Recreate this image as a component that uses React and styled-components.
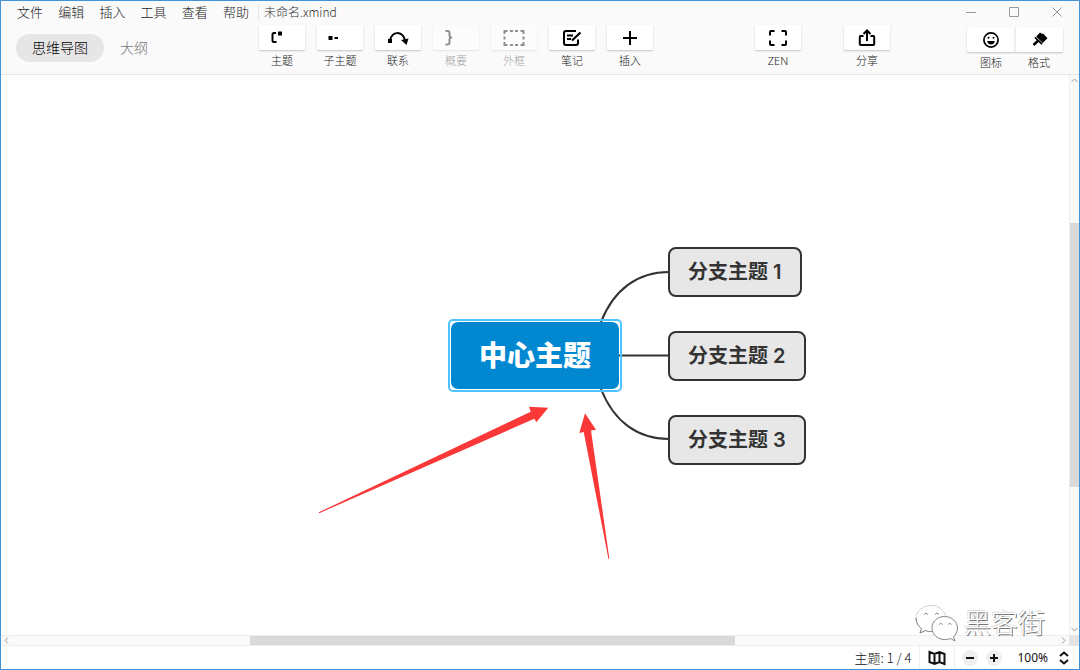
import React from "react";
import styled, { createGlobalStyle } from "styled-components";

const Global = createGlobalStyle`
  *, *::before, *::after { box-sizing: border-box; }
  body {
    margin: 0;
    font-family: "Noto Sans", "Noto Sans CJK SC", sans-serif;
    color: #333;
    background: #fff;
  }
  button { font: inherit; color: inherit; border: 0; padding: 0; background: none; cursor: pointer; }
`;

const Window = styled.div`
  display: flex;
  flex-direction: column;
  min-height: 100vh;
  border: 1px solid #4394d6;
`;

const Header = styled.header`
  background: #fafafa;
  border-bottom: 1px solid #e6e6e6;
`;

const TitleBar = styled.div`
  display: flex;
  align-items: center;
  height: 22px;
  padding: 0 16px;
  font-size: 12px;
`;

const Menu = styled.nav`
  display: flex;
  justify-content: space-between;
  width: 232px;
`;

const MenuItem = styled.button`
  font-size: 13px;
  font-weight: 300;
  line-height: 22px;
  white-space: nowrap;
  color: #222;
`;

const FileName = styled.span`
  margin-left: 9px;
  padding-left: 5px;
  border-left: 1px solid #e8e8e8;
  font-family: "Noto Sans CJK SC", sans-serif;
  line-height: 16px;
  font-weight: 300;
  color: #333;
`;

const WindowControls = styled.div`
  display: flex;
  gap: 31px;
  margin-left: auto;
  color: #999;
`;

const WindowButton = styled.button`
  display: grid;
  place-items: center;
  width: 12px;
  height: 20px;
`;

const Toolbar = styled.div`
  display: flex;
  align-items: flex-start;
  height: 51px;
  padding: 2px 16px 0 15px;
`;

const ViewTabs = styled.div`
  display: flex;
  width: 243px;
  padding-top: 9px;
`;

const ViewTab = styled.button`
  height: 28px;
  padding: 0 16px;
  border-radius: 14px;
  font-size: 14px;
  font-weight: 300;
  line-height: 28px;
  white-space: nowrap;
  background: ${(p) => (p.$active ? "#e6e6e6" : "transparent")};
  color: ${(p) => (p.$active ? "#000" : "#777")};
`;

const ToolGroup = styled.div`
  display: flex;
  gap: ${(p) => p.$gap || 12}px;
  margin-left: ${(p) => (p.$end ? "auto" : "0")};
  margin-right: ${(p) => p.$after || 0}px;
`;

const Tool = styled.button`
  display: flex;
  flex-direction: column;
  gap: 3px;
  width: 46px;
  font-size: 11px;
  font-weight: 300;
  line-height: 16px;
  text-align: center;
  white-space: nowrap;
  color: #222;
  opacity: ${(p) => (p.disabled ? 0.42 : 1)};
`;

const ToolFace = styled.span`
  display: flex;
  align-items: center;
  justify-content: ${(p) => (p.$lead ? "flex-start" : "center")};
  width: 100%;
  height: 25px;
  padding-left: ${(p) => (p.$lead ? 8 : 0)}px;
  background: #fff;
  color: #000;
  border-radius: 1px;
  box-shadow: 0 1px 2px rgba(0, 0, 0, 0.22);
`;

const PanelGroup = styled.div`
  display: flex;
  padding-top: 2px;
`;

const PanelTool = styled(Tool)`
  width: 48px;
  & + & ${ToolFace} { border-left: 1px solid #eee; }
`;

const Workspace = styled.main`
  position: relative;
  flex: 1;
  display: grid;
  grid-template-columns: 1fr 10px;
  grid-template-rows: 1fr 11px;
`;

const Canvas = styled.div`
  position: relative;
  min-height: 400px;
  overflow: hidden;
  background: #fff;
`;

const Origin = styled.div`
  position: absolute;
  left: 50%;
  top: 50%;
`;

const Lines = styled.svg`
  position: absolute;
  left: -235px;
  top: -115px;
  overflow: visible;
`;

const Topic = styled.div`
  position: absolute;
  left: 133px;
  top: ${(p) => p.$y}px;
  padding: 0 18px;
  height: 50px;
  border: 2px solid #333;
  border-radius: 8px;
  background: #e7e7e7;
  font-family: Inter, "Noto Sans CJK SC", sans-serif;
  font-size: 20px;
  font-weight: 600;
  line-height: 46px;
  white-space: nowrap;
`;

const Selection = styled.div`
  position: absolute;
  left: -87px;
  top: -36px;
  padding: 1px;
  border: 2px solid #4dc3ff;
  border-radius: 5px;
`;

const CentralTopic = styled.div`
  width: 168px;
  height: 67px;
  border-radius: 7px;
  background: #0288d1;
  color: #fff;
  font-size: 28px;
  font-weight: 900;
  line-height: 67px;
  text-align: center;
`;

const Watermark = styled.div`
  position: absolute;
  right: 34px;
  bottom: 3px;
  display: flex;
  align-items: center;
  gap: 6px;
  font-size: 27px;
  line-height: 40px;
  font-weight: 300;
  color: #fff;
  text-shadow: 1px 1px 0 #777, -1px -1px 0 #ddd;
`;

const Track = styled.div`
  display: flex;
  flex-direction: ${(p) => (p.$vertical ? "column" : "row")};
  align-items: center;
  justify-content: space-between;
  padding: ${(p) => (p.$vertical ? "1px 0" : "0 1px")};
  background: #fafafa;
  border: 0 solid #eee;
  border-width: ${(p) => (p.$vertical ? "0 0 0 1px" : "1px 0")};
  color: #999;
`;

const Rail = styled.div`
  flex: 1;
  align-self: stretch;
  display: flex;
  flex-direction: ${(p) => (p.$vertical ? "column" : "row")};
`;

const Before = styled.div`
  flex: ${(p) => p.$part} 0 0;
`;

const Thumb = styled.div`
  flex: ${(p) => p.$part} 0 0;
  background: #d9d9d9;
`;

const Arrow = styled.button`
  display: grid;
  place-items: center;
  width: 9px;
  height: 9px;
`;

const Corner = styled.div`
  background: #e4e4e4;
`;

const StatusBar = styled.footer`
  display: flex;
  justify-content: flex-end;
  align-items: center;
  height: 23px;
  padding-right: 10px;
  font-size: 12px;
  line-height: 23px;
  color: #111;
`;

const TopicCount = styled.span`
  padding-right: 8px;
  font-family: "Noto Sans CJK SC", sans-serif;
  font-size: 13px;
  font-weight: 300;
`;

const MapButton = styled.button`
  display: grid;
  place-items: center;
  width: 36px;
  height: 23px;
  border: solid #eee;
  border-width: 0 1px;
`;

const ZoomGroup = styled.div`
  display: flex;
  align-items: center;
  gap: 8px;
  padding-left: 7px;
`;

const RoundButton = styled.button`
  display: grid;
  place-items: center;
  width: 16px;
  height: 16px;
  border-radius: 50%;
  background: #f0f0f0;
`;

const ZoomValue = styled.button`
  display: flex;
  align-items: center;
  gap: 11px;
  padding-left: 7px;
`;

const Icon = ({ w = 20, h = 20, sw = 2, children, ...rest }) => (
  <svg width={w} height={h} viewBox={`0 0 ${w} ${h}`} fill="none" stroke="currentColor" strokeWidth={sw} aria-hidden="true" {...rest}>
    {children}
  </svg>
);

const icons = {
  topic: (
    <Icon>
      <path d="M9 5H7Q5.500 5 5.500 6.500V12.500Q5.500 14 7 14H9.500" />
      <path d="M11 3.500H15V7.500H11z" fill="currentColor" stroke="none" />
    </Icon>
  ),
  subtopic: (
    <Icon>
      <path d="M3.500 8H7.500V12H3.500z" fill="currentColor" stroke="none" />
      <path d="M9.500 10H13" />
    </Icon>
  ),
  relation: (
    <Icon w={22}>
      <path d="M3 12.500C5 3 15 2.500 18 12" />
      <path d="M1 11H5V15H1zM14 12L21.500 10.500L19.500 17z" fill="currentColor" stroke="none" />
    </Icon>
  ),
  summary: (
    <Icon>
      <path d="M4.500 3H6.500Q8.500 3 8.500 5V7.500Q8.500 9.500 11 9.500Q8.500 9.500 8.500 11.500V14.500Q8.500 16.500 6.500 16.500H4.500" />
    </Icon>
  ),
  boundary: (
    <Icon w={22}>
      <path d="M1.500 6V3H4.500M7 3H10M12 3H15M17.500 3H20.500V6M20.500 8.500V11.500M20.500 14V17H17.500M15 17H12M10 17H7M4.500 17H1.500V14M1.500 11.500V8.500" />
    </Icon>
  ),
  note: (
    <Icon>
      <path d="M14 3H4Q2 3 2 5V15Q2 17 4 17H14Q16 17 16 15V11.500M5 7.500H11M5 11H9" />
      <path d="M10 12.500L18.500 4.500" strokeWidth="2.200" />
    </Icon>
  ),
  plus: (
    <Icon>
      <path d="M10 3V17M3 10H17" />
    </Icon>
  ),
  zen: (
    <Icon>
      <path d="M2 7.500V4Q2 3 3 3H6.500M13.500 3H17Q18 3 18 4V7.500M18 12.500V16Q18 17 17 17H13.500M6.500 17H3Q2 17 2 16V12.500" />
    </Icon>
  ),
  share: (
    <Icon>
      <path d="M6.500 8H3.500Q2.800 8 2.800 9V16Q2.800 17 3.800 17H16.200Q17.200 17 17.200 16V9Q17.200 8 16.500 8H13.500M10 13V3M6.500 6L10 2.500L13.500 6" />
    </Icon>
  ),
  smile: (
    <Icon sw={1.700}>
      <circle cx="10" cy="10" r="7.100" />
      <path d="M6.200 11H13.800Q13.200 14.500 10 14.500Q6.800 14.500 6.200 11z" fill="currentColor" stroke="none" />
      <circle cx="7.500" cy="7.800" r="1" fill="currentColor" stroke="none" />
      <circle cx="12.500" cy="7.800" r="1" fill="currentColor" stroke="none" />
    </Icon>
  ),
  brush: (
    <Icon>
      <path d="M10 2.500L12 4L13 3.500L17.500 8.300L12.700 13L6.200 6.500z" fill="currentColor" stroke="none" />
      <path d="M5 7.300L12 14.200" strokeWidth="1.800" />
      <path d="M8 10.800L3.500 15" strokeWidth="2.600" />
    </Icon>
  ),
};

const tools = [
  { label: "主题", icon: icons.topic, lead: true },
  { label: "子主题", icon: icons.subtopic, lead: true },
  { label: "联系", icon: icons.relation },
  { label: "概要", icon: icons.summary, lead: true, disabled: true },
  { label: "外框", icon: icons.boundary, disabled: true },
  { label: "笔记", icon: icons.note },
  { label: "插入", icon: icons.plus },
];

const ToolButton = ({ as: Base = Tool, label, icon, lead, disabled }) => (
  <Base disabled={disabled}>
    <ToolFace $lead={lead}>{icon}</ToolFace>
    <span>{label}</span>
  </Base>
);

const chevrons = {
  up: "M1.500 6L4.500 3L7.500 6",
  down: "M1.500 3L4.500 6L7.500 3",
  left: "M6 1.500L3 4.500L6 7.500",
  right: "M3 1.500L6 4.500L3 7.500",
};

const ScrollArrow = ({ dir, label }) => (
  <Arrow aria-label={label}>
    <Icon w={9} h={9} sw={1}><path d={chevrons[dir]} /></Icon>
  </Arrow>
);

const menus = ["文件", "编辑", "插入", "工具", "查看", "帮助"];

export default function App() {
  return (
    <Window>
      <Global />
      <Header>
        <TitleBar>
          <Menu>{menus.map((m) => <MenuItem key={m}>{m}</MenuItem>)}</Menu>
          <FileName>未命名.xmind</FileName>
          <WindowControls>
            <WindowButton aria-label="最小化"><Icon w={12} h={12} sw={1}><path d="M1 6.500H11" /></Icon></WindowButton>
            <WindowButton aria-label="最大化"><Icon w={12} h={12} sw={1}><path d="M1.500 1.500H10.500V10.500H1.500z" /></Icon></WindowButton>
            <WindowButton aria-label="关闭"><Icon w={12} h={12} sw={1}><path d="M1.500 1.500L10.500 10.500M10.500 1.500L1.500 10.500" /></Icon></WindowButton>
          </WindowControls>
        </TitleBar>
        <Toolbar>
          <ViewTabs>
            <ViewTab $active>思维导图</ViewTab>
            <ViewTab>大纲</ViewTab>
          </ViewTabs>
          <ToolGroup>{tools.map((t) => <ToolButton key={t.label} {...t} />)}</ToolGroup>
          <ToolGroup $end $gap={43} $after={77}>
            <ToolButton label="ZEN" icon={icons.zen} />
            <ToolButton label="分享" icon={icons.share} />
          </ToolGroup>
          <PanelGroup>
            <ToolButton as={PanelTool} label="图标" icon={icons.smile} />
            <ToolButton as={PanelTool} label="格式" icon={icons.brush} />
          </PanelGroup>
        </Toolbar>
      </Header>

      <Workspace>
        <Canvas>
          <Origin>
            <Lines width="400" height="330" viewBox="300 240 400 330" aria-hidden="true">
              <g fill="none" stroke="#333" strokeWidth="2">
                <path d="M601 322C614 289 638 272 669 272" />
                <path d="M619 355.500H669" />
                <path d="M601 389C614 422 638 439 669 439" />
              </g>
              <g fill="#fb3838">
                <path d="M548.300 407.700L529 406.700L530.700 411.700L318.800 512.300L319.200 513.200L534.300 418.700L536.300 422.300z" />
                <path d="M585 413.300L579.300 433L583.700 432L608.500 559L609.400 558.900L591 430.500L596 429.700z" />
              </g>
            </Lines>
            <Topic $y={-108}>分支主题 1</Topic>
            <Topic $y={-24}>分支主题 2</Topic>
            <Topic $y={60}>分支主题 3</Topic>
            <Selection><CentralTopic>中心主题</CentralTopic></Selection>
          </Origin>
        </Canvas>
        <Track $vertical>
          <ScrollArrow dir="up" label="向上滚动" />
          <Rail $vertical><Before $part={138} /><Thumb $part={264} /><Before $part={138} /></Rail>
          <ScrollArrow dir="down" label="向下滚动" />
        </Track>
        <Track>
          <ScrollArrow dir="left" label="向左滚动" />
          <Rail><Before $part={239} /><Thumb $part={485} /><Before $part={324} /></Rail>
          <ScrollArrow dir="right" label="向右滚动" />
        </Track>
        <Corner />
        <Watermark>
          <svg width="43" height="38" viewBox="0 0 43 38" fill="#fff" stroke="#aaa" strokeWidth="0.900" aria-hidden="true">
            <path d="M16 1.500C8 1.500 1 7 1 14C1 18.500 3 22 6.500 24.500L5 29L10.500 26.500C13 27.500 14.500 27.500 17 27.500C25 27 31 21 31 14C30 6 24 1.500 16 1.500z" stroke="#ccc" />
            <path d="M1 14C1 18.500 3 22 6.500 24.500L5 29L10.500 26.500C13 27.500 14.500 27.500 17 27.500" stroke="#777" />
            <path d="M29.500 12.500C22.500 12.500 17 17.500 17 24C17 30.500 23 35.500 29.500 35.500C32 35.500 34 35 35.500 34.500L40 37L38.500 33C41 30.500 42.500 27.500 42.500 24C42 17.500 37 12.500 29.500 12.500z" stroke="#777" />
            <path d="M9 10.500Q11 7.500 13 10.500M20 10.500Q22 7.500 24 10.500M24 20.500Q25.500 18 27.500 20.500M33 20.500Q34.500 18 36.500 20.500" fill="none" stroke="#777" />
          </svg>
          <span>黑客街</span>
        </Watermark>
      </Workspace>

      <StatusBar>
        <TopicCount>主题: 1 / 4</TopicCount>
        <MapButton aria-label="导航图">
          <Icon w={18} h={16}>
            <path d="M1.500 2L6.500 4L11.500 2L16.500 4V14L11.500 12L6.500 14L1.500 12zM6.500 4V14M11.500 2V12" />
          </Icon>
        </MapButton>
        <ZoomGroup>
          <RoundButton aria-label="缩小"><Icon w={16} h={16}><path d="M4 8H12" /></Icon></RoundButton>
          <RoundButton aria-label="放大"><Icon w={16} h={16}><path d="M4 8H12M8 4V12" /></Icon></RoundButton>
          <ZoomValue>
            100%
            <Icon w={10} h={14} sw={2}><path d="M1 5L5 1.500L9 5M1 9L5 12.500L9 9" /></Icon>
          </ZoomValue>
        </ZoomGroup>
      </StatusBar>
    </Window>
  );
}
